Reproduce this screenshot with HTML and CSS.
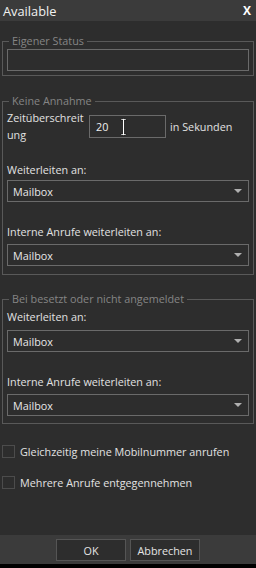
FILE: index.html
```html
<!DOCTYPE html>
<html lang="de">
<head>
    <meta charset="UTF-8">
    <meta name="viewport" content="width=device-width, initial-scale=1.0">
    <title>Available</title>
    <link rel="stylesheet" href="styles.css">
</head>
<body>
    <div class="dialog">
        <div class="titlebar">
            <span class="title">Available</span>
            <span class="close">X</span>
        </div>

        <fieldset class="group group-status">
            <legend>Eigener Status</legend>
            <div class="textbox wide"></div>
        </fieldset>

        <fieldset class="group group-noanswer">
            <legend>Keine Annahme</legend>
            <div class="timeout-row">
                <label class="timeout-label">Zeitüberschreit<wbr>ung</label>
                <div class="textbox timeout-box">
                    <span>20</span>
                    <svg class="ibeam" width="7" height="18" viewBox="0 0 7 18">
                        <path d="M0.5 0.5h2.5l0.5 0.5l0.5-0.5h2.5v1.5h-2v14h2v1.5h-2.5l-0.5-0.5l-0.5 0.5h-2.5v-1.5h2v-14h-2z" fill="#ffffff" stroke="#111111" stroke-width="0.8"/>
                    </svg>
                </div>
                <span class="unit">in Sekunden</span>
            </div>
            <div class="field-label first">Weiterleiten an:</div>
            <div class="select">Mailbox<span class="arrow"></span></div>
            <div class="field-label second">Interne Anrufe weiterleiten an:</div>
            <div class="select last">Mailbox<span class="arrow"></span></div>
        </fieldset>

        <fieldset class="group group-busy">
            <legend>Bei besetzt oder nicht angemeldet</legend>
            <div class="field-label">Weiterleiten an:</div>
            <div class="select busy-first">Mailbox<span class="arrow"></span></div>
            <div class="field-label busy-second">Interne Anrufe weiterleiten an:</div>
            <div class="select busy-last">Mailbox<span class="arrow"></span></div>
        </fieldset>

        <div class="check first-check">
            <span class="box"></span>
            <span>Gleichzeitig meine Mobilnummer anrufen</span>
        </div>
        <div class="check">
            <span class="box"></span>
            <span>Mehrere Anrufe entgegennehmen</span>
        </div>

        <div class="footer">
            <button class="btn">OK</button>
            <button class="btn">Abbrechen</button>
        </div>
        <div class="bottom-strip"></div>
    </div>
</body>
</html>
```

FILE: styles.css
```css
body {
    margin: 0;
    background-color: #000000;
    font-family: 'Open Sans', 'Noto Sans', sans-serif;
    font-size: 10.8px;
    color: #e2e2e2;
}
.dialog {
    width: 256px;
    height: 568px;
    display: flex;
    flex-direction: column;
    background-color: #2d2d2d;
}
.titlebar {
    height: 21px;
    display: flex;
    justify-content: space-between;
    align-items: center;
    padding: 0 5px 0 3px;
    background-color: #3b3b3b;
}
.title {
    font-size: 12.8px;
    color: #f2f2f2;
}
.close {
    font-size: 12px;
    font-weight: bold;
    color: #ffffff;
}
.group {
    margin: 0 2px;
    padding: 0 4px 4px 4px;
    border: 1px solid #595959;
    min-width: 0;
}
.group legend {
    margin-left: 2px;
    padding: 0 3px;
    line-height: 14px;
    color: #858585;
}
.group-status {
    margin-top: 13px;
}
.group-noanswer {
    margin-top: 18px;
    padding-bottom: 8px;
}
.group-busy {
    margin-top: 17px;
    padding-top: 2px;
    padding-bottom: 7px;
}
.textbox {
    box-sizing: border-box;
    height: 22px;
    border: 1px solid #6a6a6a;
    background-color: #2d2d2d;
}
.wide {
    margin-top: 1px;
}
.timeout-row {
    margin-top: 1px;
    height: 34px;
    display: flex;
    align-items: center;
}
.timeout-label {
    width: 82px;
    line-height: 17px;
}
.timeout-box {
    position: relative;
    width: 77px;
    height: 23px;
    display: flex;
    align-items: center;
    padding-left: 6px;
    color: #f0f0f0;
}
.ibeam {
    position: absolute;
    left: 30px;
    top: 2px;
}
.unit {
    margin-left: 4px;
}
.field-label {
    line-height: 17px;
}
.field-label.first {
    margin-top: 18px;
}
.field-label.second {
    margin-top: 21px;
}
.select {
    box-sizing: border-box;
    height: 22px;
    margin-top: 2px;
    border: 1px solid #6a6a6a;
    display: flex;
    align-items: center;
    justify-content: space-between;
    padding: 0 6px 0 5px;
    color: #e8e8e8;
}
.select.last {
    margin-top: 4px;
}
.select.busy-first {
    margin-top: 5px;
}
.field-label.busy-second {
    margin-top: 21px;
}
.select.busy-last {
    margin-top: 4px;
}
.arrow {
    width: 0;
    height: 0;
    border-left: 4px solid transparent;
    border-right: 4px solid transparent;
    border-top: 4px solid #b0b0b0;
}
.check {
    display: flex;
    align-items: center;
    gap: 5px;
    margin: 18px 0 0 2px;
    line-height: 13px;
}
.check.first-check {
    margin-top: 21px;
}
.box {
    box-sizing: border-box;
    width: 13px;
    height: 13px;
    border: 1px solid #4c4c4c;
}
.footer {
    margin-top: auto;
    height: 29px;
    display: flex;
    justify-content: center;
    align-items: center;
    gap: 4px;
    background-color: #3b3b3b;
}
.btn {
    width: 70px;
    height: 22px;
    padding: 0;
    margin-top: 1px;
    font-family: inherit;
    font-size: 10.8px;
    color: #e4e4e4;
    background-color: #2d2d2d;
    border: 1px solid #555555;
}
.bottom-strip {
    height: 4px;
    background-color: #000000;
}
```
